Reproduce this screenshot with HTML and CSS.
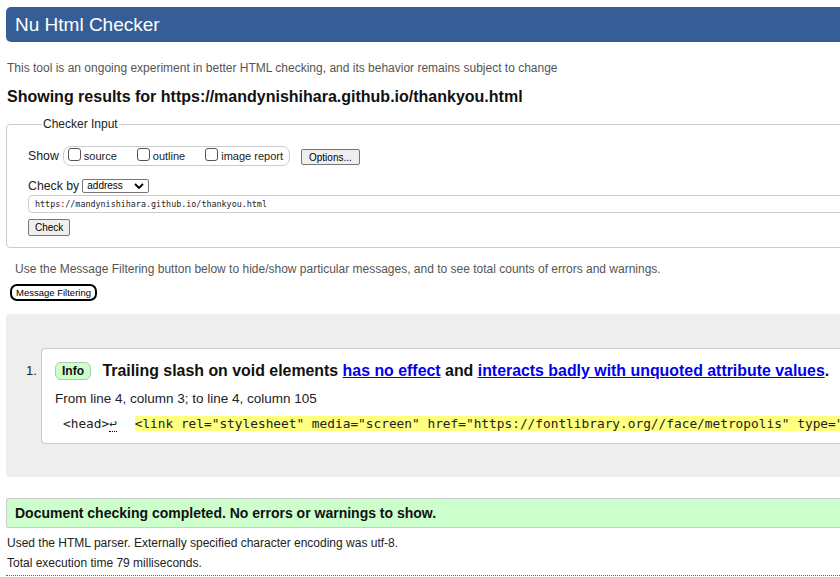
FILE: index.html
```html
<!DOCTYPE html>
<html>
<head>
<meta charset="utf-8">
<title>Nu Html Checker</title>
<link rel="stylesheet" href="styles.css">
</head>
<body>
<div class="page">
  <h1 class="banner">Nu Html Checker</h1>
  <p class="intro">This tool is an ongoing experiment in better HTML checking, and its behavior remains subject to change</p>
  <h2 class="results-title">Showing results for https://mandynishihara.github.io/thankyou.html</h2>

  <fieldset class="checker">
    <legend class="checker-legend">Checker Input</legend>
    <div class="show-row">
      <span class="label">Show</span>
      <fieldset class="show-group">
        <label class="opt"><span class="box"></span>source</label>
        <label class="opt"><span class="box"></span>outline</label>
        <label class="opt"><span class="box"></span>image report</label>
      </fieldset>
      <span class="btn btn-options">Options...</span>
    </div>
    <div class="by-row">
      <span class="label">Check by</span>
      <span class="select">address
        <svg class="chev" viewBox="0 0 10 6" width="10" height="6"><path d="M1 1 L5 5 L9 1" fill="none" stroke="#000" stroke-width="1.8"/></svg>
      </span>
    </div>
    <div class="url">https://mandynishihara.github.io/thankyou.html</div>
    <span class="btn btn-check">Check</span>
  </fieldset>

  <p class="filter-note">Use the Message Filtering button below to hide/show particular messages, and to see total counts of errors and warnings.</p>
  <span class="btn-filter">Message Filtering</span>

  <div class="results">
    <ol class="msgs">
      <li class="msg">
        <span class="num">1.</span>
        <div class="msg-card">
          <p class="msg-title"><span class="badge">Info</span> Trailing slash on void elements <a href="#">has no effect</a> and <a href="#">interacts badly with unquoted attribute values</a>.</p>
          <p class="loc">From line 4, column 3; to line 4, column 105</p>
          <p class="extract"><span class="ctx">&lt;head&gt;<span class="ret">↩</span></span> <span class="hl">&lt;link rel="stylesheet" media="screen" href="https://fontlibrary.org//face/metropolis" type="text/css"/&gt;</span></p>
        </div>
      </li>
    </ol>
  </div>

  <p class="done">Document checking completed. No errors or warnings to show.</p>
  <p class="stat">Used the HTML parser. Externally specified character encoding was utf-8.</p>
  <p class="stat">Total execution time 79 milliseconds.</p>
  <div class="rule"></div>
</div>
</body>
</html>
```

FILE: styles.css
```css
html, body {
  margin: 0;
  padding: 0;
  overflow: hidden;
  background: #fff;
}
body {
  font-family: "Liberation Sans", Arial, sans-serif;
  color: #000;
}
.page {
  width: 1300px;
  padding: 7px 0 0 6px;
}
.banner {
  margin: 0;
  height: 35px;
  background: #365d95;
  color: #fff;
  font-weight: normal;
  font-size: 19px;
  line-height: 35px;
  padding-left: 9px;
  border-radius: 5px;
}
.intro {
  margin: 19px 0 0 1px;
  font-size: 12px;
  color: #555;
  line-height: 14px;
}
.results-title {
  margin: 12px 0 0 1px;
  font-size: 16px;
  line-height: 19px;
  color: #111;
}
.checker {
  margin: 11px 0 0 0;
  border: 1px solid #ccc;
  border-radius: 4px;
  padding: 14px 0 11px 21px;
  min-width: 0;
}
.checker-legend {
  font-size: 12px;
  padding: 0 1px;
  margin-left: 14px;
  color: #222;
}
.label {
  font-size: 12.3px;
  color: #222;
}
.show-row {
  display: flex;
  align-items: center;
  height: 22px;
}
.show-group {
  margin: 0 0 0 4px;
  display: flex;
  align-items: center;
  gap: 20px;
  border: 1px solid #ccc;
  border-radius: 8px;
  padding: 0 6px 0 4px;
  height: 18px;
  min-width: 0;
}
.opt {
  display: flex;
  align-items: center;
  font-size: 11px;
  color: #222;
  gap: 3px;
}
.box {
  display: inline-block;
  width: 11px;
  height: 11px;
  border: 1px solid #555;
  border-radius: 3px;
  background: #fff;
  margin-top: -4px;
}
.btn {
  display: inline-block;
  font-size: 10px;
  background: #efefef;
  border: 1px solid #767676;
  border-radius: 2px;
  line-height: 13px;
  color: #000;
}
.btn-options {
  margin-left: 11px;
  padding: 1px 7px 0 7px;
  margin-top: 2px;
}
.by-row {
  display: flex;
  align-items: center;
  margin-top: 11px;
  height: 16px;
}
.select {
  margin-left: 3px;
  display: inline-flex;
  align-items: center;
  justify-content: space-between;
  width: 57px;
  height: 12px;
  padding: 0 4px 0 4px;
  border: 1px solid #767676;
  border-radius: 2px;
  font-size: 10px;
  line-height: 12px;
}
.url {
  margin-top: 1px;
  height: 16px;
  border: 1px solid #ccc;
  border-right: none;
  border-radius: 5px 0 0 5px;
  font-family: "DejaVu Sans Mono", monospace;
  font-size: 8.4px;
  line-height: 16px;
  padding-left: 6px;
  color: #222;
}
.btn-check {
  margin-top: 6px;
  padding: 1px 6px 1px 6px;
}
.filter-note {
  margin: 14px 0 0 9px;
  font-size: 12px;
  color: #555;
  line-height: 14px;
}
.btn-filter {
  display: inline-block;
  margin: 8px 0 0 4px;
  font-size: 9.5px;
  line-height: 13px;
  padding: 0 4px;
  border: 2px solid #000;
  border-radius: 7px;
  color: #000;
}
.results {
  margin-top: 13px;
  background: #eee;
  border-radius: 4px 0 0 4px;
  padding: 34px 0 33px 0;
}
.msgs {
  list-style: none;
  margin: 0;
  padding: 0;
}
.msg {
  display: flex;
}
.num {
  width: 35px;
  padding: 15px 0 0 20px;
  box-sizing: border-box;
  font-size: 13px;
  color: #222;
}
.msg-card {
  flex: 1;
  background: #fff;
  border: 1px solid #ccc;
  border-right: none;
  border-radius: 4px 0 0 4px;
  padding: 12px 0 10px 13px;
}
.msg-title {
  margin: 0;
  font-size: 15.9px;
  font-weight: bold;
  color: #111;
  line-height: 20px;
}
.msg-title a {
  color: #00e;
}
.badge {
  display: inline-block;
  font-size: 12px;
  line-height: 16px;
  padding: 0 6px;
  background: #ccffcc;
  border: 1px solid #aca;
  border-radius: 6px;
  color: #111;
  margin-right: 7px;
  vertical-align: 1px;
}
.loc {
  margin: 10px 0 0 0;
  font-size: 13.5px;
  color: #222;
  line-height: 16px;
}
.extract {
  margin: 8px 0 0 8px;
  font-family: "DejaVu Sans Mono", monospace;
  font-size: 12.8px;
  line-height: 18px;
  white-space: nowrap;
  color: #222;
}
.ctx {
  margin-right: 10px;
}
.ret {
  border-bottom: 1px dotted #000;
}
.hl {
  background: #ffff80;
}
.done {
  margin: 21px 0 0 0;
  background: #ccffcc;
  border: 1px solid #ccc;
  border-right: none;
  border-radius: 3px 0 0 3px;
  font-size: 14px;
  font-weight: bold;
  line-height: 28px;
  padding-left: 8px;
  color: #111;
}
.stat {
  margin: 8px 0 0 1px;
  font-size: 12px;
  line-height: 14px;
  color: #222;
}
.stat + .stat {
  margin-top: 6px;
}
.rule {
  margin-top: 5px;
  border-top: 1px dotted #666;
}
```
